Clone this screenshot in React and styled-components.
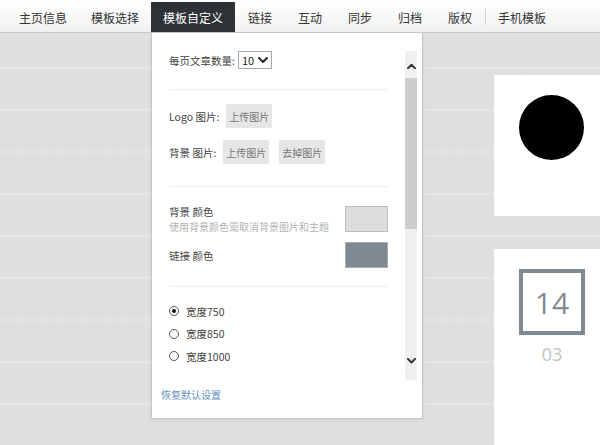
import React from 'react';
import styled, { createGlobalStyle, css } from 'styled-components';

const GlobalStyle = createGlobalStyle`
  html, body, #root {
    height: 100%;
  }
  body {
    margin: 0;
    overflow: hidden;
    font-family: 'Noto Sans CJK SC', 'Noto Sans', sans-serif;
    color: #333;
  }
`;

const Page = styled.div`
  height: 100%;
  display: flex;
  flex-direction: column;
  background-color: #dfdfe0;
  background-image: repeating-linear-gradient(
      0deg,
      transparent 0 40px,
      rgba(255, 255, 255, 0.18) 40px 42px
    ),
    repeating-linear-gradient(
      90deg,
      transparent 0 20px,
      rgba(255, 255, 255, 0.12) 20px 21px
    );
  overflow: hidden;
`;

const TopBar = styled.header`
  position: relative;
  z-index: 2;
  flex-shrink: 0;
  height: 30px;
  padding: 2px 0 0 7px;
  display: flex;
  align-items: stretch;
  background: linear-gradient(#ffffff, #f1f1f1);
  border-bottom: 1px solid #c9c9c9;
`;

const MenuWrap = styled.div`
  position: relative;
  display: flex;
`;

const NavItem = styled.div`
  box-sizing: border-box;
  min-width: 50px;
  padding: 0 12px;
  display: flex;
  align-items: center;
  justify-content: center;
  font-size: 12px;
  white-space: nowrap;
  color: #333;
  cursor: pointer;
  ${(p) =>
    p.$active &&
    css`
      background: #2e3237;
      color: #fff;
    `}
`;

const NavDivider = styled.span`
  width: 1px;
  height: 16px;
  align-self: center;
  background: #cfcfcf;
`;

const Dropdown = styled.div`
  position: absolute;
  top: calc(100% + 1px);
  left: 0;
  width: 272px;
  box-sizing: border-box;
  padding: 18px 5px 0 9px;
  background: #fff;
  border: 1px solid #c6c6c6;
  border-top: none;
  box-shadow: 0 1px 3px rgba(0, 0, 0, 0.08);
  color: #444;
`;

const ScrollArea = styled.div`
  height: 329px;
  display: flex;
`;

const Content = styled.div`
  flex: 1;
  overflow: hidden;
  padding: 0 17px 0 8px;
  font-size: 10.5px;
`;

const Row = styled.div`
  display: flex;
  align-items: center;
  height: ${(p) => p.$h || 24}px;
  margin-top: ${(p) => p.$mt || 0}px;
`;

const Label = styled.span`
  margin-right: ${(p) => p.$mr || 7}px;
  white-space: nowrap;
`;

const FakeSelect = styled.div`
  box-sizing: border-box;
  width: 34px;
  height: 18px;
  padding: 0 3px 0 3px;
  display: flex;
  align-items: center;
  justify-content: space-between;
  border: 1px solid #a9a9a9;
  font-size: 11px;
  color: #222;
`;

const Rule = styled.hr`
  border: none;
  height: 1px;
  background: #ececec;
  margin: ${(p) => p.$m};
`;

const GrayButton = styled.button`
  height: 24px;
  padding: 0 3px;
  margin-right: 10px;
  border: none;
  background: #e6e6e6;
  color: #777;
  font-family: inherit;
  font-size: 10px;
  cursor: pointer;
`;

const ColorRow = styled.div`
  height: 26px;
  display: flex;
  align-items: center;
  justify-content: space-between;
  margin-top: ${(p) => p.$mt || 0}px;
`;

const ColorText = styled.div`
  display: flex;
  flex-direction: column;
  line-height: 15px;
`;

const Hint = styled.span`
  font-size: 10px;
  color: #b3b3b3;
`;

const Swatch = styled.span`
  box-sizing: border-box;
  width: 43px;
  height: 26px;
  border: 1px solid ${(p) => (p.$dark ? '#a8adb1' : '#bcbcbc')};
  background: ${(p) => p.$color};
`;

const RadioRow = styled.label`
  display: flex;
  align-items: center;
  height: 22.5px;
  cursor: pointer;
`;

const RadioDot = styled.span`
  box-sizing: border-box;
  width: 10px;
  height: 10px;
  margin-right: 7px;
  border-radius: 50%;
  border: 1px solid #555;
  display: flex;
  align-items: center;
  justify-content: center;
  &::after {
    content: '';
    width: 4px;
    height: 4px;
    border-radius: 50%;
    background: ${(p) => (p.$checked ? '#111' : 'transparent')};
  }
`;

const Track = styled.div`
  width: 12px;
  display: flex;
  flex-direction: column;
  background: #f0f0f0;
`;

const ArrowButton = styled.div`
  height: 27px;
  box-sizing: border-box;
  display: flex;
  justify-content: center;
  align-items: flex-start;
  padding-top: ${(p) => (p.$down ? 5 : 12)}px;
`;

const Thumb = styled.div`
  height: 151px;
  background: #cdcdcd;
`;

const TrackRest = styled.div`
  flex: 1;
`;

const Footer = styled.div`
  height: 38px;
  box-sizing: border-box;
  padding-top: 8px;
  line-height: 14px;
  font-size: 10px;
`;

const ResetLink = styled.a`
  color: #5f8fbf;
  text-decoration: none;
  cursor: pointer;
`;

const Stage = styled.main`
  flex: 1;
  padding-top: 42px;
`;

const Preview = styled.div`
  margin-left: 494px;
  width: 240px;
`;

const Card = styled.section`
  background: #fff;
  box-sizing: border-box;
  padding: 20px 25px;
  height: ${(p) => p.$h}px;
  margin-top: ${(p) => p.$mt || 0}px;
`;

const Avatar = styled.div`
  width: 65px;
  height: 65px;
  border-radius: 50%;
  background: #000;
`;

const DateBox = styled.div`
  box-sizing: border-box;
  width: 66px;
  height: 66px;
  border: 4px solid #7f8a92;
  display: flex;
  align-items: center;
  justify-content: center;
  font-family: 'Open Sans', sans-serif;
  font-size: 30px;
  color: #7f8a92;
`;

const Month = styled.div`
  width: 66px;
  margin-top: 9px;
  text-align: center;
  font-family: 'Open Sans', sans-serif;
  font-size: 18px;
  line-height: 20px;
  color: #c2c2c2;
`;

function Chevron({ up, size = 9, weight = 2 }) {
  return (
    <svg width={size} height={size * 0.7} viewBox="0 0 10 7">
      <path
        d={up ? 'M1 6 L5 2 L9 6' : 'M1 1 L5 5 L9 1'}
        fill="none"
        stroke="#333"
        strokeWidth={weight}
        strokeLinecap="round"
        strokeLinejoin="round"
      />
    </svg>
  );
}

const navItems = ['链接', '互动', '同步', '归档', '版权'];
const widths = ['宽度750', '宽度850', '宽度1000'];

function CustomizePanel() {
  return (
    <Dropdown>
      <ScrollArea>
        <Content>
          <Row $h={18}>
            <Label $mr={3}>每页文章数量:</Label>
            <FakeSelect>
              <span>10</span>
              <Chevron size={10} weight={2.2} />
            </FakeSelect>
          </Row>
          <Rule $m="20px 0 14px" />
          <Row>
            <Label>Logo 图片:</Label>
            <GrayButton type="button">上传图片</GrayButton>
          </Row>
          <Row $mt={12}>
            <Label>背景 图片:</Label>
            <GrayButton type="button">上传图片</GrayButton>
            <GrayButton type="button">去掉图片</GrayButton>
          </Row>
          <Rule $m="22px 0 19px" />
          <ColorRow>
            <ColorText>
              <span>背景 颜色</span>
              <Hint>使用背景颜色需取消背景图片和主题</Hint>
            </ColorText>
            <Swatch $color="#dcdcdc" />
          </ColorRow>
          <ColorRow $mt={10}>
            <ColorText>
              <span>链接 颜色</span>
            </ColorText>
            <Swatch $color="#7f8992" $dark />
          </ColorRow>
          <Rule $m="18px 0 13px" />
          {widths.map((w, i) => (
            <RadioRow key={w}>
              <RadioDot $checked={i === 0} />
              {w}
            </RadioRow>
          ))}
        </Content>
        <Track>
          <ArrowButton>
            <Chevron up size={9} weight={2.2} />
          </ArrowButton>
          <Thumb />
          <TrackRest />
          <ArrowButton $down>
            <Chevron size={9} weight={2.2} />
          </ArrowButton>
        </Track>
      </ScrollArea>
      <Footer>
        <ResetLink>恢复默认设置</ResetLink>
      </Footer>
    </Dropdown>
  );
}

export default function App() {
  return (
    <>
      <GlobalStyle />
      <Page>
        <TopBar>
          <NavItem>主页信息</NavItem>
          <NavItem>模板选择</NavItem>
          <MenuWrap>
            <NavItem $active>模板自定义</NavItem>
            <CustomizePanel />
          </MenuWrap>
          {navItems.map((item) => (
            <NavItem key={item}>{item}</NavItem>
          ))}
          <NavDivider />
          <NavItem>手机模板</NavItem>
        </TopBar>
        <Stage>
          <Preview>
            <Card $h={141}>
              <Avatar />
            </Card>
            <Card $h={240} $mt={33}>
              <DateBox>14</DateBox>
              <Month>03</Month>
            </Card>
          </Preview>
        </Stage>
      </Page>
    </>
  );
}
